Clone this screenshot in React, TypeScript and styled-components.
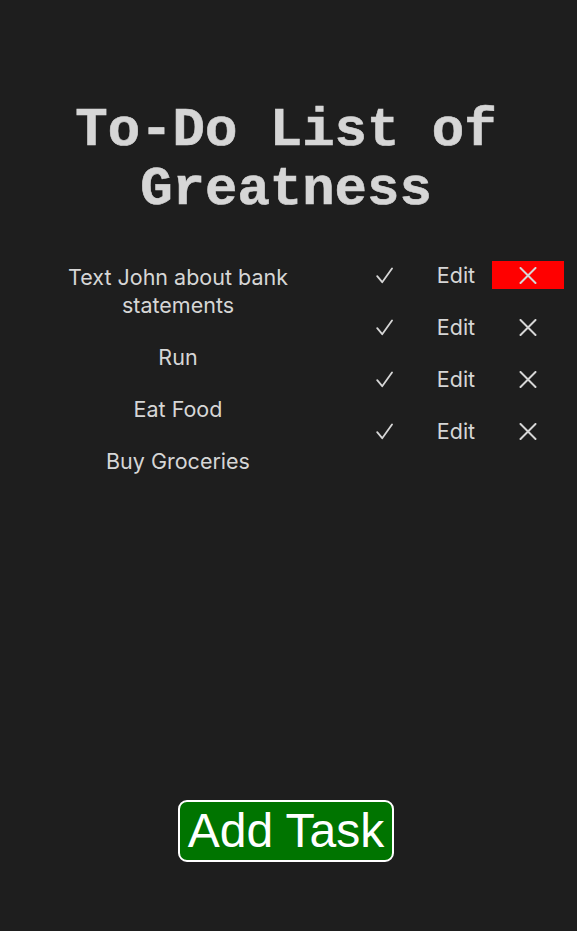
import React from "react";
import styled, { createGlobalStyle } from "styled-components";

const GlobalStyle = createGlobalStyle`
  html, body {
    margin: 0;
    padding: 0;
    background: #1e1e1e;
  }
`;

const Page = styled.div`
  display: flex;
  flex-direction: column;
  min-height: 100vh;
  box-sizing: border-box;
  padding: 101px 13px 69px 8px;
  color: #d6d6d6;
  font-family: Inter, "Noto Sans", sans-serif;
`;

const Title = styled.h1`
  margin: 0 0 42px;
  text-align: center;
  font-family: "Liberation Mono", "Courier New", monospace;
  font-weight: 700;
  font-size: 54px;
  line-height: 59px;
  color: #d6d6d6;
  -webkit-text-stroke: 0.6px #d6d6d6;
`;

const Board = styled.div`
  display: flex;
  flex-direction: row;
  align-items: flex-start;
`;

const TaskColumn = styled.ul`
  flex: 1;
  display: flex;
  flex-direction: column;
  gap: 24px;
  margin: 2px 0 0;
  padding: 0;
  list-style: none;
`;

const TaskText = styled.li`
  padding: 0 50px;
  text-align: center;
  font-size: 21.5px;
  line-height: 28px;
`;

const ActionColumn = styled.div`
  display: flex;
  flex-direction: column;
  gap: 24px;
`;

const ActionRow = styled.div`
  display: flex;
  flex-direction: row;
`;

const ActionButton = styled.button<{ $danger?: boolean }>`
  display: flex;
  align-items: center;
  justify-content: center;
  width: 72px;
  height: 28px;
  padding: 0;
  border: none;
  background: ${(p) => (p.$danger ? "#ff0000" : "transparent")};
  color: #d6d6d6;
  font-family: Inter, "Noto Sans", sans-serif;
  font-size: 21.5px;
  line-height: 28px;
  cursor: pointer;
`;

const Footer = styled.div`
  display: flex;
  justify-content: center;
  margin-top: auto;
`;

const AddButton = styled.button`
  padding: 3px 8px;
  border: 2px solid #ffffff;
  border-radius: 9px;
  background: #007400;
  color: #ffffff;
  font-family: "Liberation Sans", Arial, sans-serif;
  font-size: 48px;
  line-height: 52px;
  cursor: pointer;
`;

const CheckIcon = () => (
  <svg width="17" height="17" viewBox="0 0 17 17" fill="none">
    <path
      d="M1.2 9.2 L6.2 15.2 L16 1.5"
      stroke="#d6d6d6"
      strokeWidth="1.8"
      strokeLinecap="round"
      strokeLinejoin="round"
    />
  </svg>
);

const CrossIcon = () => (
  <svg width="18" height="17" viewBox="0 0 18 17" fill="none">
    <path
      d="M1.5 1 L16.5 16 M16.5 1 L1.5 16"
      stroke="#d6d6d6"
      strokeWidth="2"
      strokeLinecap="round"
    />
  </svg>
);

const tasks = [
  "Text John about bank statements",
  "Run",
  "Eat Food",
  "Buy Groceries",
];

export default function App() {
  return (
    <>
      <GlobalStyle />
      <Page>
        <Title>
          To-Do List of
          <br />
          Greatness
        </Title>
        <Board>
          <TaskColumn>
            {tasks.map((task) => (
              <TaskText key={task}>{task}</TaskText>
            ))}
          </TaskColumn>
          <ActionColumn>
            {tasks.map((task, i) => (
              <ActionRow key={task}>
                <ActionButton>
                  <CheckIcon />
                </ActionButton>
                <ActionButton>Edit</ActionButton>
                <ActionButton $danger={i === 0}>
                  <CrossIcon />
                </ActionButton>
              </ActionRow>
            ))}
          </ActionColumn>
        </Board>
        <Footer>
          <AddButton>Add Task</AddButton>
        </Footer>
      </Page>
    </>
  );
}
